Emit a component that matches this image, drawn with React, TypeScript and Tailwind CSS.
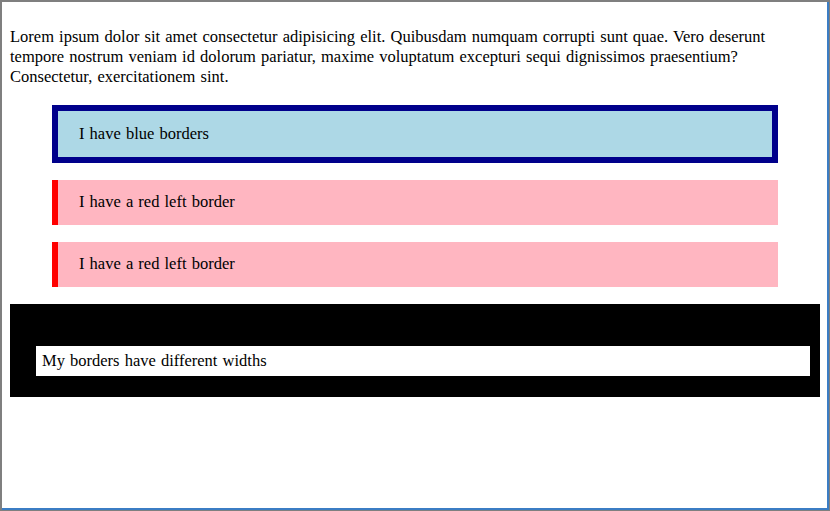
export default function App() {
  return (
    <div className="w-[830px] h-[511px] bg-[#7f7f7f] pl-[2px] pt-[2px] pr-[1px] pb-[1px] font-['Liberation_Serif',serif] text-black text-[16.5px] [word-spacing:1px]">
      <div className="h-full bg-white border-r-2 border-b-2 border-[#3b7dc4] pl-[8px] pr-[7px] pt-[25px]">
        <p className="leading-[20px]">
          Lorem ipsum dolor sit amet consectetur adipisicing elit. Quibusdam numquam corrupti sunt quae. Vero deserunt
          tempore nostrum veniam id dolorum pariatur, maxime voluptatum excepturi sequi dignissimos praesentium?
          Consectetur, exercitationem sint.
        </p>

        <div className="mt-[18px] flex flex-col gap-[17px] mx-[42px]">
          <div className="h-[58px] border-[6px] border-[#00008b] bg-[#add8e6] pl-[21px] flex items-center">
            I have blue borders
          </div>
          <div className="h-[45px] border-l-[6px] border-[#ff0000] bg-[#ffb6c1] pl-[21px] flex items-center">
            I have a red left border
          </div>
          <div className="h-[45px] border-l-[6px] border-[#ff0000] bg-[#ffb6c1] pl-[21px] flex items-center">
            I have a red left border
          </div>
        </div>

        <div className="mt-[17px] border-black border-t-[42px] border-r-[10px] border-b-[21px] border-l-[26px] bg-white h-[93px] pl-[6px] flex items-center">
          My borders have different widths
        </div>
      </div>
    </div>
  )
}
